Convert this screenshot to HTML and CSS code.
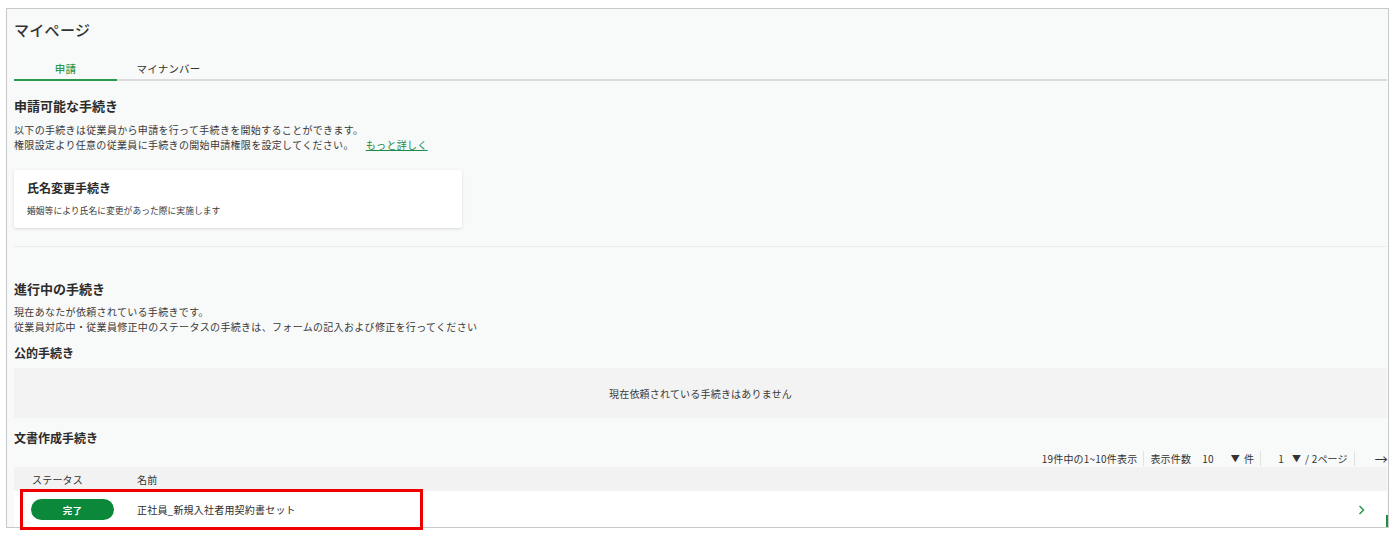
FILE: index.html
```html
<!DOCTYPE html>
<html lang="ja">
<head>
<meta charset="utf-8">
<title>マイページ</title>
<link rel="stylesheet" href="styles.css">
</head>
<body>
<div class="page">
  <h1 class="title">マイページ</h1>
  <div class="tabs">
    <div class="tab active">申請</div>
    <div class="tab">マイナンバー</div>
  </div>

  <h2 class="heading first">申請可能な手続き</h2>
  <p class="desc">以下の手続きは従業員から申請を行って手続きを開始することができます。<br>権限設定より任意の従業員に手続きの開始申請権限を設定してください。<a class="more" href="#">もっと詳しく</a></p>

  <div class="card">
    <div class="card-title">氏名変更手続き</div>
    <div class="card-desc">婚姻等により氏名に変更があった際に実施します</div>
  </div>

  <hr class="divider">

  <h2 class="heading second">進行中の手続き</h2>
  <p class="desc">現在あなたが依頼されている手続きです。<br>従業員対応中・従業員修正中のステータスの手続きは、フォームの記入および修正を行ってください</p>

  <h3 class="sub public">公的手続き</h3>
  <div class="empty">現在依頼されている手続きはありません</div>

  <h3 class="sub docs">文書作成手続き</h3>
  <div class="pager">
    <span class="pg-item">19件中の1~10件表示</span>
    <span class="pg-sep"></span>
    <span class="pg-item">表示件数</span>
    <span class="pg-num">10</span>
    <span class="pg-caret wide">▼</span>
    <span class="pg-item">件</span>
    <span class="pg-sep"></span>
    <span class="pg-num one">1</span>
    <span class="pg-caret">▼</span>
    <span class="pg-item">/ 2ページ</span>
    <span class="pg-sep"></span>
    <span class="pg-arrow">→</span>
  </div>
  <div class="table">
    <div class="thead">
      <div class="c-status">ステータス</div>
      <div class="c-name">名前</div>
    </div>
    <div class="trow">
      <div class="c-status"><span class="pill">完了</span></div>
      <div class="c-name">正社員_新規入社者用契約書セット</div>
      <svg class="chev" width="7" height="10" viewBox="0 0 7 10"><polyline points="1.5,1 5.5,5 1.5,9" fill="none" stroke="#1f8f45" stroke-width="1.4"/></svg>
      <span class="edge"></span>
    </div>
  </div>
</div>
<div class="highlight"></div>
</body>
</html>
```

FILE: styles.css
```css
* { box-sizing: border-box; }
html, body { margin: 0; padding: 0; background: #ffffff; }
body {
  font-family: "Noto Sans CJK JP", "Noto Sans", sans-serif;
  color: #333333;
  position: relative;
  width: 1397px;
  height: 537px;
  overflow: hidden;
}
.page {
  margin: 8px 0 0 6px;
  width: 1383px;
  height: 520px;
  border: 1px solid #c8c8c8;
  background: #f8f9f9;
  padding: 0 1px 0 7px;
  overflow: hidden;
}
.title {
  margin: 11px 0 0 0;
  font-size: 15px;
  line-height: 20px;
  font-weight: 500;
  color: #333;
  letter-spacing: 0.3px;
}
.tabs {
  margin-top: 19px;
  display: flex;
  border-bottom: 2px solid #dcdcdc;
}
.tab {
  width: 103px;
  text-align: center;
  font-size: 10.5px;
  line-height: 14px;
  padding: 3px 0 3px;
  color: #333;
  margin-bottom: -2px;
  border-bottom: 2px solid transparent;
  letter-spacing: 0.2px;
}
.tab.active {
  color: #2b9a4f;
  border-bottom-color: #2b9a4f;
  font-weight: 500;
}
.heading {
  margin: 0 0 7px 0;
  font-size: 13px;
  line-height: 18px;
  font-weight: 700;
  color: #2b2b2b;
}
.heading.first { margin-top: 16px; }
.heading.second { margin-top: 33px; margin-bottom: 6px; }
.desc {
  margin: 0;
  font-size: 10px;
  line-height: 15px;
  color: #3a3a3a;
  letter-spacing: 0.32px;
}
.more {
  color: #1e8a4a;
  text-decoration: underline;
  margin-left: 12px;
}
.card {
  margin-top: 18px;
  width: 448px;
  height: 58px;
  background: #ffffff;
  border-radius: 2px;
  box-shadow: 0 1px 3px rgba(0,0,0,0.13);
  padding: 10px 12px 0 13px;
}
.card-title {
  font-size: 12px;
  line-height: 16px;
  font-weight: 700;
  color: #2b2b2b;
}
.card-desc {
  margin-top: 9px;
  font-size: 8.8px;
  line-height: 12px;
  color: #3a3a3a;
}
.divider {
  margin: 18px 0 0 0;
  border: 0;
  height: 1px;
  background: #ebebeb;
}
.sub {
  margin: 0;
  font-size: 12px;
  line-height: 16px;
  font-weight: 700;
  color: #2b2b2b;
}
.sub.public { margin-top: 11px; }
.sub.docs { margin-top: 12px; }
.empty {
  margin-top: 7px;
  height: 50px;
  background: #f3f3f3;
  display: flex;
  align-items: center;
  justify-content: center;
  font-size: 10px;
  color: #3a3a3a;
  padding-top: 1px;
  letter-spacing: 0.2px;
}
.pager {
  margin-top: 4px;
  height: 17px;
  display: flex;
  justify-content: flex-end;
  align-items: center;
  font-size: 10px;
  color: #333;
  letter-spacing: 0.2px;
}
.pg-sep {
  width: 1px;
  height: 15px;
  background: #e2e2e2;
  margin: 0 6px;
}
.pg-num { margin-left: 11px; }
.pg-num.one { margin-left: 11px; }
.pg-caret { font-size: 9px; margin-left: 8px; margin-right: 4px; }
.pg-caret.wide { margin-left: 17px; }
.pg-arrow {
  font-size: 13px;
  margin-left: 14px;
  margin-right: -1px;
  color: #333;
}
.table { width: 100%; }
.thead {
  height: 24px;
  background: #f2f2f2;
  display: flex;
  align-items: center;
  font-size: 10px;
  color: #333;
  letter-spacing: 0.2px;
}
.thead .c-status { padding-left: 18px; }
.c-status { width: 123px; flex: none; }
.trow {
  position: relative;
  height: 36px;
  background: #ffffff;
  display: flex;
  align-items: center;
  font-size: 10px;
  color: #2b2b2b;
  letter-spacing: 0.2px;
}
.trow .c-status { padding-left: 17px; padding-top: 1px; }
.trow .c-name { flex: 1; padding-top: 1px; }
.pill {
  display: flex;
  align-items: center;
  justify-content: center;
  width: 83px;
  height: 21px;
  border-radius: 11px;
  background: #0b883a;
  color: #ffffff;
  font-weight: 700;
  font-size: 9.5px;
}
.chev { margin-right: 22px; margin-top: 2px; }
.edge {
  position: absolute;
  right: -1px;
  bottom: 0;
  width: 2px;
  height: 12px;
  background: #1f8f45;
}
.highlight {
  position: absolute;
  left: 20px;
  top: 489px;
  width: 403px;
  height: 41px;
  border: 3px solid #ee0000;
}
```
